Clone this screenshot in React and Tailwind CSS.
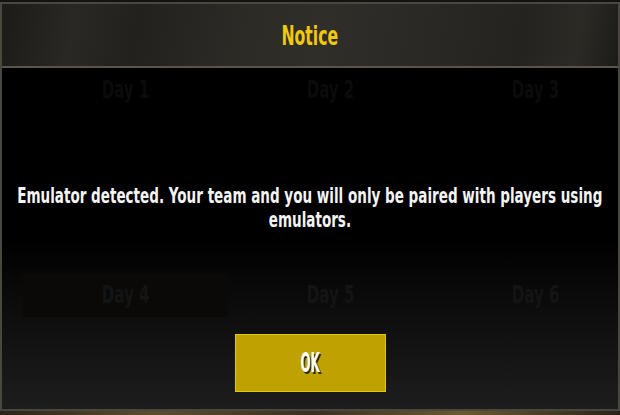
export default function App() {
  const dias = ["Day 1", "Day 2", "Day 3"];
  const dias2 = ["Day 4", "Day 5", "Day 6"];

  return (
    <div
      className="w-[620px] h-[415px] bg-[#15130f] overflow-hidden"
      style={{ fontFamily: '"DejaVu Sans", "Liberation Sans", sans-serif' }}
    >
      <div className="mt-[2px] h-[409px] border-[2px] border-[#4a4740] flex flex-col bg-black">
        {/* Cabecera */}
        <div className="h-[64px] shrink-0 flex items-center justify-center border-b-[2px] border-[#59554b] bg-[linear-gradient(100deg,#1c1b18_0%,#2a2824_12%,#22211d_22%,#2d2b26_40%,#302e29_52%,#2a2824_70%,#24231f_84%,#2c2a25_93%,#1c1b18_100%)]">
          <h1 className="text-[27px] font-bold text-[#f2c80c] scale-x-[0.58] mt-[2px]">Notice</h1>
        </div>

        {/* Cuerpo */}
        <div className="flex-1 flex flex-col bg-[linear-gradient(180deg,#000_0%,#000_50%,#0b0b0b_68%,#1d1d1d_100%)]">
          <div className="ml-[21px] grid grid-cols-[205px_205px_205px] h-[44px] items-center">
            {dias.map((d) => (
              <div key={d} className="text-center text-[25px] font-bold text-[#0b0b0b] scale-x-[0.6]">
                {d}
              </div>
            ))}
          </div>

          <div className="h-[72px]"></div>

          <div className="flex flex-col items-center text-center text-[#f4f4f4] text-[22px] font-bold leading-[24px]">
            <p className="scale-x-[0.615] whitespace-nowrap">
              Emulator detected. Your team and you will only be paired with players using
            </p>
            <p className="scale-x-[0.615]">emulators.</p>
          </div>

          <div className="h-[41px]"></div>

          <div className="ml-[21px] grid grid-cols-[205px_205px_205px] h-[44px] items-center">
            {dias2.map((d, i) => (
              <div
                key={d}
                className={`h-full flex items-center justify-center ${i === 0 ? "bg-[#0a0907]" : ""}`}
              >
                <span className="text-[25px] font-bold text-[#141414] scale-x-[0.6]">{d}</span>
              </div>
            ))}
          </div>

          <div className="h-[17px]"></div>

          <div className="flex justify-center">
            <button className="w-[151px] h-[58px] bg-[#bfa100] border border-[#e5c800] flex items-center justify-center">
              <span className="text-[26px] font-bold text-white scale-x-[0.46] [text-shadow:3px_2px_0_#2e2600]">OK</span>
            </button>
          </div>
        </div>
      </div>
      <div className="h-[4px] bg-[linear-gradient(90deg,#2a2418,#5d4e2c,#3a3020,#6b5a30,#2a2418)]"></div>
    </div>
  );
}
